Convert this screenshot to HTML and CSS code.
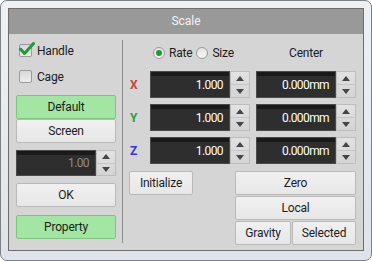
FILE: index.html
```html
<!DOCTYPE html>
<html lang="en">
<head>
<meta charset="UTF-8">
<title>Scale</title>
<link rel="stylesheet" href="styles.css">
</head>
<body>
<div class="window">
  <div class="frame">
    <div class="titlebar">Scale</div>
    <div class="content">

      <div class="left">
        <label class="check first">
          <span class="box">
            <svg class="tick" width="16" height="14" viewBox="0 0 16 14"><path d="M1.5 7 L5.5 11.5 L14.5 1.5" fill="none" stroke="#1f9a36" stroke-width="3" stroke-linecap="round" stroke-linejoin="round"/></svg>
          </span>
          Handle
        </label>
        <label class="check second"><span class="box"></span>Cage</label>

        <div class="btn green default">Default</div>
        <div class="btn">Screen</div>

        <div class="spin small">
          <div class="field muted">1.00</div>
          <div class="arrows"><span class="up"></span><span class="down"></span></div>
        </div>

        <div class="btn ok">OK</div>
        <div class="btn green prop">Property</div>
      </div>

      <div class="divider"></div>

      <div class="right">
        <div class="grid">
          <div class="radios">
            <span class="radio on"></span>Rate
            <span class="radio"></span>Size
          </div>
          <div class="center-label">Center</div>

          <div class="axis x">X</div>
          <div class="spin"><div class="field">1.000</div><div class="arrows"><span class="up"></span><span class="down"></span></div></div>
          <div class="spin"><div class="field">0.000mm</div><div class="arrows"><span class="up"></span><span class="down"></span></div></div>

          <div class="axis y">Y</div>
          <div class="spin"><div class="field">1.000</div><div class="arrows"><span class="up"></span><span class="down"></span></div></div>
          <div class="spin"><div class="field">0.000mm</div><div class="arrows"><span class="up"></span><span class="down"></span></div></div>

          <div class="axis z">Z</div>
          <div class="spin"><div class="field">1.000</div><div class="arrows"><span class="up"></span><span class="down"></span></div></div>
          <div class="spin"><div class="field">0.000mm</div><div class="arrows"><span class="up"></span><span class="down"></span></div></div>
        </div>

        <div class="bottom">
          <div class="btn init">Initialize</div>
          <div class="stack">
            <div class="btn">Zero</div>
            <div class="btn">Local</div>
            <div class="pair">
              <div class="btn">Gravity</div>
              <div class="btn">Selected</div>
            </div>
          </div>
        </div>
      </div>

    </div>
  </div>
</div>
</body>
</html>
```

FILE: styles.css
```css
body {
  margin: 0;
  background: #ffffff;
  font-family: Roboto, "Noto Sans", sans-serif;
  font-size: 12px;
  color: #1c1c1c;
}

.window {
  width: 372px;
  height: 261px;
  box-sizing: border-box;
  border: 1px solid #7c8188;
  border-radius: 7px;
  padding: 7px 7px 8px 7px;
  background: linear-gradient(#eef1f4, #dfe3e8);
}

.frame {
  height: 243px;
  box-sizing: border-box;
  border: 1px solid #6e6e6e;
  display: flex;
  flex-direction: column;
}

.titlebar {
  height: 25px;
  line-height: 25px;
  background: #999999;
  color: #f2f2f2;
  text-align: center;
  font-size: 12px;
}

.content {
  flex: 1;
  background: #d5d5d5;
  display: flex;
  padding-left: 7px;
}

/* left column */
.left {
  width: 100px;
  display: flex;
  flex-direction: column;
}

.check {
  display: flex;
  align-items: center;
  height: 13px;
  letter-spacing: -0.2px;
}

.check.first { margin-top: 10px; }
.check.second { margin-top: 13px; }

.box {
  position: relative;
  width: 11px;
  height: 11px;
  margin: 0 5px 0 3px;
  border: 1px solid #9b9b9b;
  border-radius: 2px;
  background: linear-gradient(#d9d9d9, #ececec);
}

.tick {
  position: absolute;
  left: -1px;
  top: -3px;
}

.btn {
  box-sizing: border-box;
  height: 24px;
  display: flex;
  align-items: center;
  justify-content: center;
  border: 1px solid #b9b9b9;
  border-radius: 2px;
  background: linear-gradient(#f0f0f0, #e7e7e7);
  letter-spacing: -0.2px;
}

.btn.green {
  background: #a3e6a3;
  border-color: #80c480;
}

.default { margin-top: 12px; }
.ok { margin-top: 7px; }
.prop { margin-top: 8px; }

/* spin boxes */
.spin {
  display: flex;
  width: 100px;
  height: 27px;
}

.spin.small {
  height: 26px;
  margin-top: 7px;
}

.field {
  width: 80px;
  box-sizing: border-box;
  padding-right: 6px;
  display: flex;
  align-items: center;
  justify-content: flex-end;
  background: linear-gradient(#1a1a1a 0, #1a1a1a 4px, #2e2e2e 4px);
  border: 1px solid #4a4a4a;
  color: #ffffff;
  letter-spacing: -0.6px;
  font-size: 12px;
}

.field.muted {
  color: #8c8c8c;
}

.arrows {
  width: 20px;
  box-sizing: border-box;
  display: flex;
  flex-direction: column;
  border: 1px solid #bdbdbd;
  background: linear-gradient(#e2e2e2, #d4d4d4);
}

.arrows span {
  flex: 1;
  display: flex;
  align-items: center;
  justify-content: center;
}

.arrows .up {
  border-bottom: 1px solid #c6c6c6;
}

.arrows .up::after,
.arrows .down::after {
  content: "";
  border-left: 4px solid transparent;
  border-right: 4px solid transparent;
}

.arrows .up::after { border-bottom: 5px solid #454545; }
.arrows .down::after { border-top: 5px solid #454545; }

.divider {
  width: 1px;
  background: #8e8e8e;
  margin: 6px 0 7px 6px;
}

/* right area */
.right {
  margin-left: 6px;
  width: 227px;
  display: flex;
  flex-direction: column;
}

.grid {
  display: grid;
  grid-template-columns: 21px 106px 100px;
  row-gap: 6px;
  margin-top: 9px;
}

.radios {
  grid-column: 1 / 3;
  height: 20px;
  display: flex;
  align-items: center;
  padding-left: 24px;
  margin-bottom: 2px;
  letter-spacing: -0.2px;
}

.radio {
  width: 10px;
  height: 10px;
  border: 1px solid #9a9a9a;
  border-radius: 50%;
  background: linear-gradient(#e4e4e4, #f6f6f6);
  margin: 0 4px;
  display: flex;
  align-items: center;
  justify-content: center;
}

.radios .radio:first-child { margin-left: 0; }

.radio.on::after {
  content: "";
  width: 6px;
  height: 6px;
  border-radius: 50%;
  background: #1a9a3a;
}

.center-label {
  display: flex;
  align-items: center;
  justify-content: center;
  height: 20px;
  letter-spacing: -0.2px;
}

.axis {
  display: flex;
  align-items: center;
  padding-left: 1px;
  font-weight: bold;
  font-size: 12px;
}

.axis.x { color: #cc4040; }
.axis.y { color: #2f9e3c; }
.axis.z { color: #3636d6; }

.bottom {
  display: flex;
  justify-content: space-between;
  margin-top: 7px;
}

.init {
  width: 64px;
}

.stack {
  width: 121px;
  display: flex;
  flex-direction: column;
  gap: 1px;
}

.pair {
  display: flex;
  gap: 1px;
}

.pair .btn:first-child { width: 56px; }
.pair .btn:last-child { flex: 1; }
```
